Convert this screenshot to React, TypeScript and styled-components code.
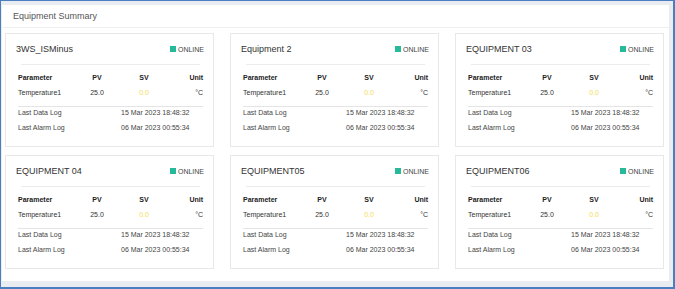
import styled, { createGlobalStyle } from "styled-components";

type Equipment = {
  name: string;
};

const equipments: Equipment[] = [
  { name: "3WS_ISMinus" },
  { name: "Equipment 2" },
  { name: "EQUIPMENT 03" },
  { name: "EQUIPMENT 04" },
  { name: "EQUIPMENT05" },
  { name: "EQUIPMENT06" },
];

const GlobalStyle = createGlobalStyle`
  html, body {
    margin: 0;
    padding: 0;
    background: #ffffff;
  }
  * {
    box-sizing: border-box;
  }
`;

const EquipmentCard = ({ equipment }: { equipment: Equipment }) => {
  return (
    <Card>
      <CardHeader>
        <Title>{equipment.name}</Title>
        <Status>
          <StatusDot />
          ONLINE
        </Status>
      </CardHeader>
      <Divider />
      <Table>
        <HeadCell>Parameter</HeadCell>
        <HeadCell $align="center">PV</HeadCell>
        <HeadCell $align="center">SV</HeadCell>
        <HeadCell $align="right">Unit</HeadCell>
        <Cell>Temperature1</Cell>
        <Cell $align="center">25.0</Cell>
        <Cell $align="center" $color="#f3dc55">
          0.0
        </Cell>
        <Cell $align="right">°C</Cell>
      </Table>
      <LogList>
        <LogRow>
          <span>Last Data Log</span>
          <span>15 Mar 2023 18:48:32</span>
        </LogRow>
        <LogRow>
          <span>Last Alarm Log</span>
          <span>06 Mar 2023 00:55:34</span>
        </LogRow>
      </LogList>
    </Card>
  );
};

export default function App() {
  return (
    <>
      <GlobalStyle />
      <Frame>
        <Panel>
          <PanelHeader>Equipment Summary</PanelHeader>
          <CardGrid>
            {equipments.map((eq) => (
              <EquipmentCard key={eq.name} equipment={eq} />
            ))}
          </CardGrid>
        </Panel>
      </Frame>
    </>
  );
}

const Frame = styled.div`
  width: 675px;
  height: 289px;
  border: 1px solid #4a7ec0;
  border-right-width: 2px;
  border-bottom-width: 2px;
  background: #e9ecf1;
  padding: 4px 4px 6px 1px;
  display: flex;
  font-family: "Liberation Sans", Arial, sans-serif;
  color: #333;
`;

const Panel = styled.div`
  flex: 1;
  background: #ffffff;
  display: flex;
  flex-direction: column;
`;

const PanelHeader = styled.div`
  height: 23px;
  padding: 0 0 1px 11px;
  display: flex;
  align-items: center;
  border-bottom: 1px solid #eef0f2;
  font-size: 9px;
  color: #555;
`;

const CardGrid = styled.div`
  display: grid;
  grid-template-columns: repeat(3, 209px);
  grid-auto-rows: 114px;
  column-gap: 16px;
  row-gap: 8px;
  padding: 5px 0 0 3px;
`;

const Card = styled.div`
  border: 1px solid #e8e8e8;
  padding: 0 9px 0 10px;
  display: flex;
  flex-direction: column;
`;

const CardHeader = styled.div`
  height: 30px;
  display: flex;
  align-items: center;
  justify-content: space-between;
`;

const Title = styled.div`
  font-size: 9px;
  color: #333;
`;

const Status = styled.div`
  display: flex;
  align-items: center;
  gap: 2px;
  font-size: 7px;
  color: #444;
`;

const StatusDot = styled.span`
  width: 6px;
  height: 6px;
  background: #26b99a;
`;

const Divider = styled.div`
  height: 1px;
  background: #ececec;
  margin: 0 4px 0 5px;
`;

const Table = styled.div`
  display: grid;
  grid-template-columns: 56px 46px 48px 1fr;
  grid-auto-rows: 15px;
  margin: 5px 1px 6px 2px;
  font-size: 7px;
`;

const HeadCell = styled.div<{ $align?: "left" | "center" | "right" }>`
  display: flex;
  align-items: center;
  justify-content: ${(p) =>
    p.$align === "center" ? "center" : p.$align === "right" ? "flex-end" : "flex-start"};
  font-weight: bold;
  color: #222;
`;

const Cell = styled.div<{ $align?: "left" | "center" | "right"; $color?: string }>`
  display: flex;
  align-items: center;
  justify-content: ${(p) =>
    p.$align === "center" ? "center" : p.$align === "right" ? "flex-end" : "flex-start"};
  color: ${(p) => p.$color ?? "#333"};
`;

const LogList = styled.div`
  border-top: 1px solid #e4e4e4;
  margin: 0 1px 0 2px;
`;

const LogRow = styled.div`
  display: grid;
  grid-template-columns: 103px 1fr;
  height: 11px;
  line-height: 11px;
  margin-bottom: 4px;
  font-size: 7px;
  color: #444;
`;
